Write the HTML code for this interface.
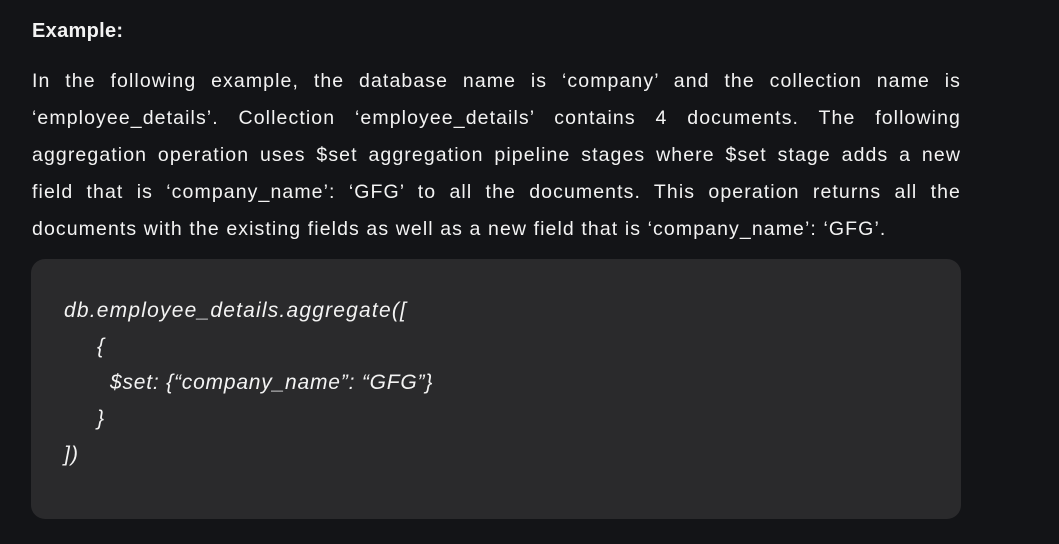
<!DOCTYPE html>
<html><head><meta charset="utf-8"><style>
html,body{margin:0;padding:0;background:#131417;width:1059px;height:544px;overflow:hidden}
body{font-family:"Liberation Sans",sans-serif;color:#f3f3f3}
h3{position:absolute;left:32px;top:19px;margin:0;font-size:20px;font-weight:bold;line-height:24px;letter-spacing:0.3px}
.p{position:absolute;left:32px;top:63px;width:929px;font-size:19.5px;line-height:37px;letter-spacing:1.1px}
.p div{text-align:justify;text-align-last:justify;white-space:nowrap}
.p div.l{text-align-last:left}
.code{position:absolute;left:31px;top:259px;width:930px;height:260px;background:#2a2a2c;border-radius:14px}
.code div{position:absolute;font-style:italic;font-size:21px;line-height:36px;white-space:pre;letter-spacing:1.2px}
</style></head><body>
<h3>Example:</h3>
<div class="p">
<div>In the following example, the database name is ‘company’ and the collection name is</div>
<div>‘employee_details’. Collection ‘employee_details’ contains 4 documents. The following</div>
<div>aggregation operation uses $set aggregation pipeline stages where $set stage adds a new</div>
<div>field that is ‘company_name’: ‘GFG’ to all the documents. This operation returns all the</div>
<div class="l">documents with the existing fields as well as a new field that is ‘company_name’: ‘GFG’.</div>
</div>
<div class="code">
<div style="left:33px;top:34px">db.employee_details.aggregate([</div>
<div style="left:66px;top:70px">{</div>
<div style="left:79px;top:106px;letter-spacing:0.8px">$set: {“company_name”: “GFG”}</div>
<div style="left:66px;top:142px">}</div>
<div style="left:33px;top:178px">])</div>
</div>
</body></html>
